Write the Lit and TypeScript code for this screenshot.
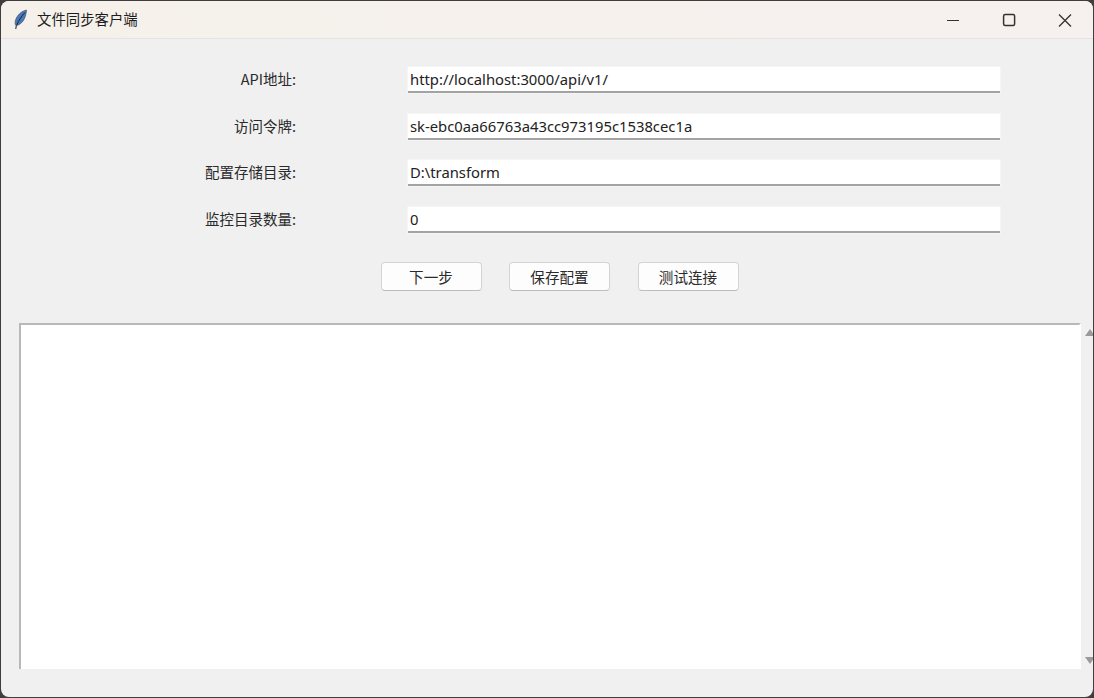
import { LitElement, html, css } from "lit";
import { customElement } from "lit/decorators.js";

const FIELDS = [
  { label: "API地址:", value: "http://localhost:3000/api/v1/" },
  { label: "访问令牌:", value: "sk-ebc0aa66763a43cc973195c1538cec1a" },
  { label: "配置存储目录:", value: "D:\\transform" },
  { label: "监控目录数量:", value: "0" },
];

const ACTIONS = ["下一步", "保存配置", "测试连接"];

@customElement("app-root")
class AppRoot extends LitElement {
  static override styles = css`
    :host {
      display: block;
      width: 1094px;
      height: 698px;
      box-sizing: border-box;
      padding: 1px;
      background: #3f3d3d;
      font-family: "Noto Sans CJK SC", "Noto Sans", sans-serif;
      color: #222;
      overflow: hidden;
    }

    .window {
      height: 100%;
      display: flex;
      flex-direction: column;
      background: #f0f0f0;
      border-radius: 8px;
      overflow: hidden;
    }

    .titlebar {
      flex: none;
      height: 38px;
      box-sizing: border-box;
      display: flex;
      align-items: center;
      background: linear-gradient(90deg, #f5f1ea, #f6f1ef);
      border-bottom: 1px solid #e4e3e2;
    }

    .app-icon {
      flex: none;
      width: 16px;
      height: 22px;
      margin: 0 9px 0 11px;
    }

    .title {
      flex: 1;
      padding-bottom: 2px;
      font-size: 14.4px;
      line-height: 20px;
      color: #1e1e1e;
    }

    .controls {
      display: flex;
    }

    .controls svg {
      display: block;
      width: 56px;
      height: 36px;
    }

    .form {
      display: grid;
      grid-template-columns: 295px 592px;
      column-gap: 112px;
      row-gap: 20.67px;
      padding-top: 28px;
    }

    label {
      text-align: right;
      font-size: 14.5px;
      line-height: 23px;
      color: #2a2a2a;
    }

    input {
      display: block;
      width: 100%;
      height: 26px;
      box-sizing: border-box;
      margin: 0;
      padding: 0 2px;
      border: none;
      border-bottom: 2px solid #a3a3a3;
      outline: none;
      background: #fff;
      box-shadow: 0 0 0 1px #f5f5f5;
      font-family: "Noto Sans", "Noto Sans CJK SC", sans-serif;
      font-size: 14.8px;
      color: #222;
    }

    .actions {
      display: flex;
      gap: 27.5px;
      padding: 29px 0 0 379.5px;
    }

    button {
      width: 101px;
      height: 29px;
      padding: 0;
      background: #fdfdfd;
      border: 1px solid #d4d4d4;
      border-bottom-color: #bdbdbd;
      border-radius: 4px;
      font-family: inherit;
      font-size: 14.6px;
      color: #2a2a2a;
    }

    .log {
      flex: 1;
      min-height: 0;
      display: flex;
      margin: 32px 0 28px 18px;
    }

    textarea {
      flex: 1;
      display: block;
      box-sizing: border-box;
      margin: 0;
      padding: 0;
      resize: none;
      outline: none;
      border-style: solid;
      border-width: 2px 2px 0 2px;
      border-color: #b8b8b8 #fff #fff #b8b8b8;
      border-radius: 0;
      background: #fff;
    }

    .scrollbar {
      flex: none;
      width: 12px;
      box-sizing: border-box;
      padding: 6px 0 5px 4px;
      display: flex;
      flex-direction: column;
      justify-content: space-between;
    }

    .arrow {
      flex: none;
      width: 0;
      height: 0;
      border-left: 5px solid transparent;
      border-right: 5px solid transparent;
    }

    .arrow.up {
      border-bottom: 7px solid #9a9a9a;
    }

    .arrow.down {
      border-top: 7px solid #9a9a9a;
    }
  `;

  override render() {
    return html`
      <div class="window">
        <header class="titlebar">
          <svg class="app-icon" viewBox="0 0 16 22">
            <path d="M14.5 1C10 1.8 4.8 6 3.4 11.5c-.6 2.4-.3 4 .6 5.2 3.2-.6 6-2.6 8-6.2 1.5-2.8 2.3-6.2 2.5-9.5z" fill="#4a78b8" stroke="#3a4a60" stroke-width=".6" />
            <path d="M13 3.5C10 6.5 6.8 11 4.6 16.4" stroke="#14243c" stroke-width="1" fill="none" />
            <path d="M4.6 16.2 3.6 20" stroke="#555" stroke-width="1.3" fill="none" />
          </svg>
          <span class="title">文件同步客户端</span>
          <div class="controls">
            <svg viewBox="0 0 56 36">
              <path d="M22 18.5h12" stroke="#333" stroke-width="1.2" fill="none" />
            </svg>
            <svg viewBox="0 0 56 36">
              <rect x="22.6" y="12.6" width="11" height="11" rx="1.5" stroke="#333" stroke-width="1.5" fill="none" />
            </svg>
            <svg viewBox="0 0 56 36">
              <path d="M22 12.5l12 12m0-12l-12 12" stroke="#333" stroke-width="1.3" fill="none" />
            </svg>
          </div>
        </header>

        <div class="form">
          ${FIELDS.map(
            (f) => html`<label>${f.label}</label><input .value=${f.value} />`
          )}
        </div>

        <div class="actions">
          ${ACTIONS.map((a) => html`<button>${a}</button>`)}
        </div>

        <div class="log">
          <textarea></textarea>
          <div class="scrollbar">
            <div class="arrow up"></div>
            <div class="arrow down"></div>
          </div>
        </div>
      </div>
    `;
  }
}

// Prevent tree-shaking
void AppRoot;
